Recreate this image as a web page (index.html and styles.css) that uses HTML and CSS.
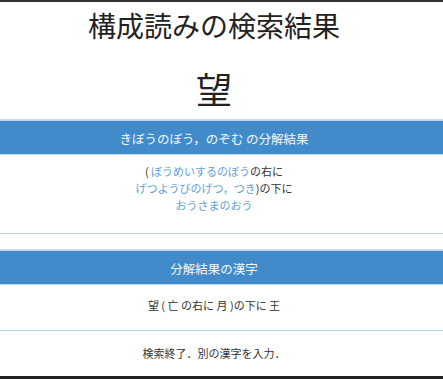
FILE: index.html
```html
<!DOCTYPE html>
<html lang="ja">
<head>
<meta charset="UTF-8">
<meta name="viewport" content="width=device-width, initial-scale=1.0">
<title>構成読みの検索結果</title>
<link rel="stylesheet" href="styles.css">
</head>
<body>

<div class="page">
  <h2 class="title">構成読みの検索結果</h2>
  <h1 class="kanji">望</h1>

  <div class="panel">
    <div class="panel-heading">きぼうのぼう，のぞむ の分解結果</div>
    <div class="panel-body parts">
      ( <a href="#">ぼうめいするのぼう</a>の右に<br>
      <a href="#">げつようびのげつ，つき</a>)の下に<br>
      <a href="#">おうさまのおう</a>
    </div>
  </div>

  <div class="panel second">
    <div class="panel-heading">分解結果の漢字</div>
    <div class="panel-body result">望 ( 亡 の右に 月 )の下に 王</div>
  </div>

  <div class="message">検索終了．別の漢字を入力．</div>
</div>

</body>
</html>
```

FILE: styles.css
```css
  body {
    margin: 0;
    font-family: "Noto Sans CJK JP", "Noto Sans", sans-serif;
    color: #333;
    background-color: #fff;
  }
  .page {
    height: 374px;
    border-top: 2px solid #333;
    border-bottom: 3px solid #222;
    text-align: center;
  }
  .title {
    margin: 3px 0 0;
    padding-right: 15px;
    font-size: 28px;
    font-weight: normal;
    line-height: 40px;
    color: #222;
  }
  .kanji {
    margin: 22px 0 0;
    padding-right: 15px;
    font-size: 36px;
    font-weight: normal;
    line-height: 42px;
    color: #222;
  }
  .panel {
    margin-top: 10px;
    border-bottom: 1px solid #b7cfe9;
  }
  .panel.second {
    margin-top: 15px;
  }
  .panel-heading {
    height: 30px;
    padding: 3px 15px 0 0;
    border-top: 2px solid #c3d8ef;
    border-bottom: 1px solid #c3d8ef;
    background-color: #428bca;
    color: #f4f8fc;
    font-size: 12.5px;
    line-height: 30px;
  }
  .panel-body {
    padding-right: 15px;
    font-size: 11px;
    line-height: 17px;
  }
  .parts {
    padding-top: 8px;
    padding-bottom: 19px;
  }
  .result {
    padding-top: 12px;
    padding-bottom: 16px;
  }
  .panel-body a {
    color: #629fd6;
    text-decoration: none;
  }
  .message {
    padding: 14px 15px 0 0;
    font-size: 11px;
    line-height: 17px;
  }
```
